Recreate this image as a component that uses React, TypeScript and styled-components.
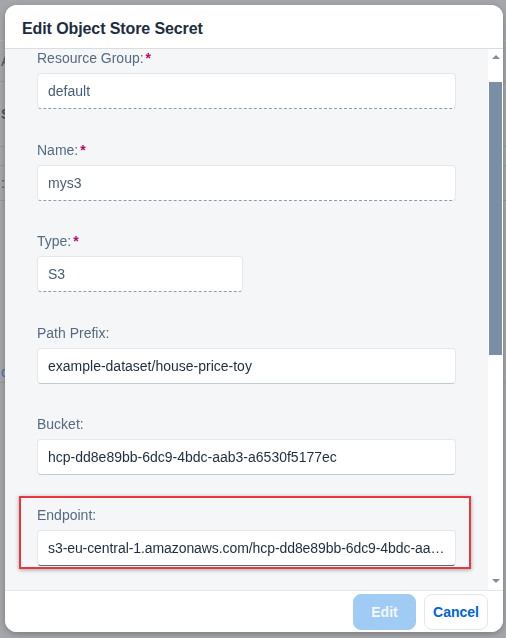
import React from "react";
import styled, { createGlobalStyle } from "styled-components";

const Global = createGlobalStyle`
  html, body { margin: 0; padding: 0; }
  body {
    width: 506px;
    height: 638px;
    overflow: hidden;
    background: #a9abad;
    font-family: "Liberation Sans", Arial, sans-serif;
  }
`;

const Page = styled.div`
  width: 506px;
  height: 638px;
  display: flex;
  flex-direction: column;
  background: #b3b5b7;
`;

const BgRow = styled.div<{ $h: number; $line?: string }>`
  height: ${(p) => p.$h}px;
  border-bottom: 1px solid ${(p) => p.$line || "#9fa2a5"};
  display: flex;
  align-items: center;
  padding-left: 1px;
  font-size: 14px;
  color: #33475b;
`;

const BgLink = styled.span`
  color: #2a6cc0;
`;

const Overlay = styled.div`
  position: fixed;
  inset: 0;
  background: rgba(120, 124, 128, 0.25);
  display: flex;
  align-items: flex-start;
  justify-content: flex-start;
  padding: 5px 3px 6px 5px;
`;

const Dialog = styled.div`
  width: 498px;
  height: 627px;
  background: #ffffff;
  border-radius: 12px;
  box-shadow: 0 2px 6px rgba(0, 0, 0, 0.25);
  display: flex;
  flex-direction: column;
  overflow: hidden;
`;

const Header = styled.div`
  height: 44px;
  box-sizing: border-box;
  flex: none;
  display: flex;
  align-items: center;
  padding: 4px 17px 0;
  border-bottom: 1px solid #d9dde1;
  background: #ffffff;
`;

const Title = styled.h1`
  margin: 0;
  font-size: 16px;
  font-weight: 700;
  color: #1d2d3e;
  letter-spacing: -0.1px;
`;

const Body = styled.div`
  flex: 1;
  display: flex;
  min-height: 0;
  border-bottom: 1px solid #e4e7ea;
`;

const Content = styled.div`
  flex: 1;
  background: #f5f6f7;
  padding: 0 32px;
  display: flex;
  flex-direction: column;
  gap: 31.6px;
  overflow: hidden;
`;

const Field = styled.div`
  display: flex;
  flex-direction: column;
  gap: 6px;
`;

const Label = styled.label`
  font-size: 14px;
  line-height: 18px;
  color: #556b82;
`;

const Req = styled.span`
  color: #ba066c;
  font-weight: 700;
  margin-left: 2px;
`;

const Input = styled.input<{ $mode: "readonly" | "edit" | "hover"; $w?: number }>`
  box-sizing: border-box;
  height: 36px;
  width: ${(p) => (p.$w ? `${p.$w}px` : "100%")};
  padding: 0 10px;
  font-family: "Liberation Sans", Arial, sans-serif;
  font-size: 14px;
  letter-spacing: ${(p) => (p.$mode === "hover" ? "-0.08px" : "0")};
  color: ${(p) => (p.$mode === "readonly" ? "#475e75" : "#1d2d3e")};
  background: #ffffff;
  border: 1px solid #e5e7ea;
  border-bottom: 1px
    ${(p) =>
      p.$mode === "readonly"
        ? "dashed #8e9cab"
        : p.$mode === "hover"
        ? "solid #556b82"
        : "solid #c2cad2"};
  border-radius: 4px;
  outline: none;
  text-overflow: ellipsis;
  white-space: nowrap;
  overflow: hidden;
`;

const Highlight = styled.div`
  margin: -11px -15px 0 -18px;
  padding: 8px 13px 1px 16px;
  border: 2px solid #e8383d;
  box-shadow: 0 1px 4px rgba(0, 0, 0, 0.35);
`;

const ScrollTrack = styled.div`
  width: 15px;
  flex: none;
  background: #ffffff;
  display: flex;
  flex-direction: column;
  align-items: center;
`;

const Arrow = styled.div<{ $down?: boolean }>`
  width: 0;
  height: 0;
  border-left: 4px solid transparent;
  border-right: 4px solid transparent;
  ${(p) =>
    p.$down
      ? "border-top: 4px solid #7b8ea3; margin-top: auto; margin-bottom: 7px;"
      : "border-bottom: 4px solid #7b8ea3; margin-top: 6px;"}
`;

const Thumb = styled.div`
  width: 13px;
  height: 273px;
  margin-top: 23px;
  background: #7a8fa6;
`;

const Footer = styled.div`
  height: 41px;
  flex: none;
  display: flex;
  align-items: center;
  justify-content: flex-end;
  gap: 8px;
  padding: 0 15px;
  background: #ffffff;
`;

const Button = styled.button<{ $primary?: boolean }>`
  height: 36px;
  box-sizing: border-box;
  border-radius: 8px;
  font-family: "Liberation Sans", Arial, sans-serif;
  font-size: 14px;
  font-weight: 700;
  padding: 0;
  width: ${(p) => (p.$primary ? "63px" : "64px")};
  background: ${(p) => (p.$primary ? "#9fcbf5" : "#ffffff")};
  color: ${(p) => (p.$primary ? "#f2f8fe" : "#0064d9")};
  border: 1px solid ${(p) => (p.$primary ? "#9fcbf5" : "#e3e7eb")};
`;

export default function App() {
  return (
    <>
      <Global />
      <Page>
        <BgRow $h={40} $line="#c2c4c6" />
        <BgRow $h={40}>A</BgRow>
        <BgRow $h={64}>
          <b>S</b>
        </BgRow>
        <BgRow $h={18} />
        <BgRow $h={34}>:</BgRow>
        <BgRow $h={160} $line="#b3b5b7" />
        <BgRow $h={20}>
          <BgLink>o</BgLink>
        </BgRow>
      </Page>
      <Overlay>
        <Dialog>
          <Header>
            <Title>Edit Object Store Secret</Title>
          </Header>
          <Body>
            <Content>
              <Field>
                <Label>
                  Resource Group:<Req>*</Req>
                </Label>
                <Input $mode="readonly" readOnly value="default" />
              </Field>
              <Field>
                <Label>
                  Name:<Req>*</Req>
                </Label>
                <Input $mode="readonly" readOnly value="mys3" />
              </Field>
              <Field>
                <Label>
                  Type:<Req>*</Req>
                </Label>
                <Input $mode="readonly" $w={206} readOnly value="S3" />
              </Field>
              <Field>
                <Label>Path Prefix:</Label>
                <Input $mode="edit" readOnly value="example-dataset/house-price-toy" />
              </Field>
              <Field>
                <Label>Bucket:</Label>
                <Input
                  $mode="edit"
                  readOnly
                  value="hcp-dd8e89bb-6dc9-4bdc-aab3-a6530f5177ec"
                />
              </Field>
              <Highlight>
                <Field>
                  <Label>Endpoint:</Label>
                  <Input
                    $mode="hover"
                    readOnly
                    value="s3-eu-central-1.amazonaws.com/hcp-dd8e89bb-6dc9-4bdc-aab3-a6530f5177ec"
                  />
                </Field>
              </Highlight>
            </Content>
            <ScrollTrack>
              <Arrow />
              <Thumb />
              <Arrow $down />
            </ScrollTrack>
          </Body>
          <Footer>
            <Button $primary>Edit</Button>
            <Button>Cancel</Button>
          </Footer>
        </Dialog>
      </Overlay>
    </>
  );
}
